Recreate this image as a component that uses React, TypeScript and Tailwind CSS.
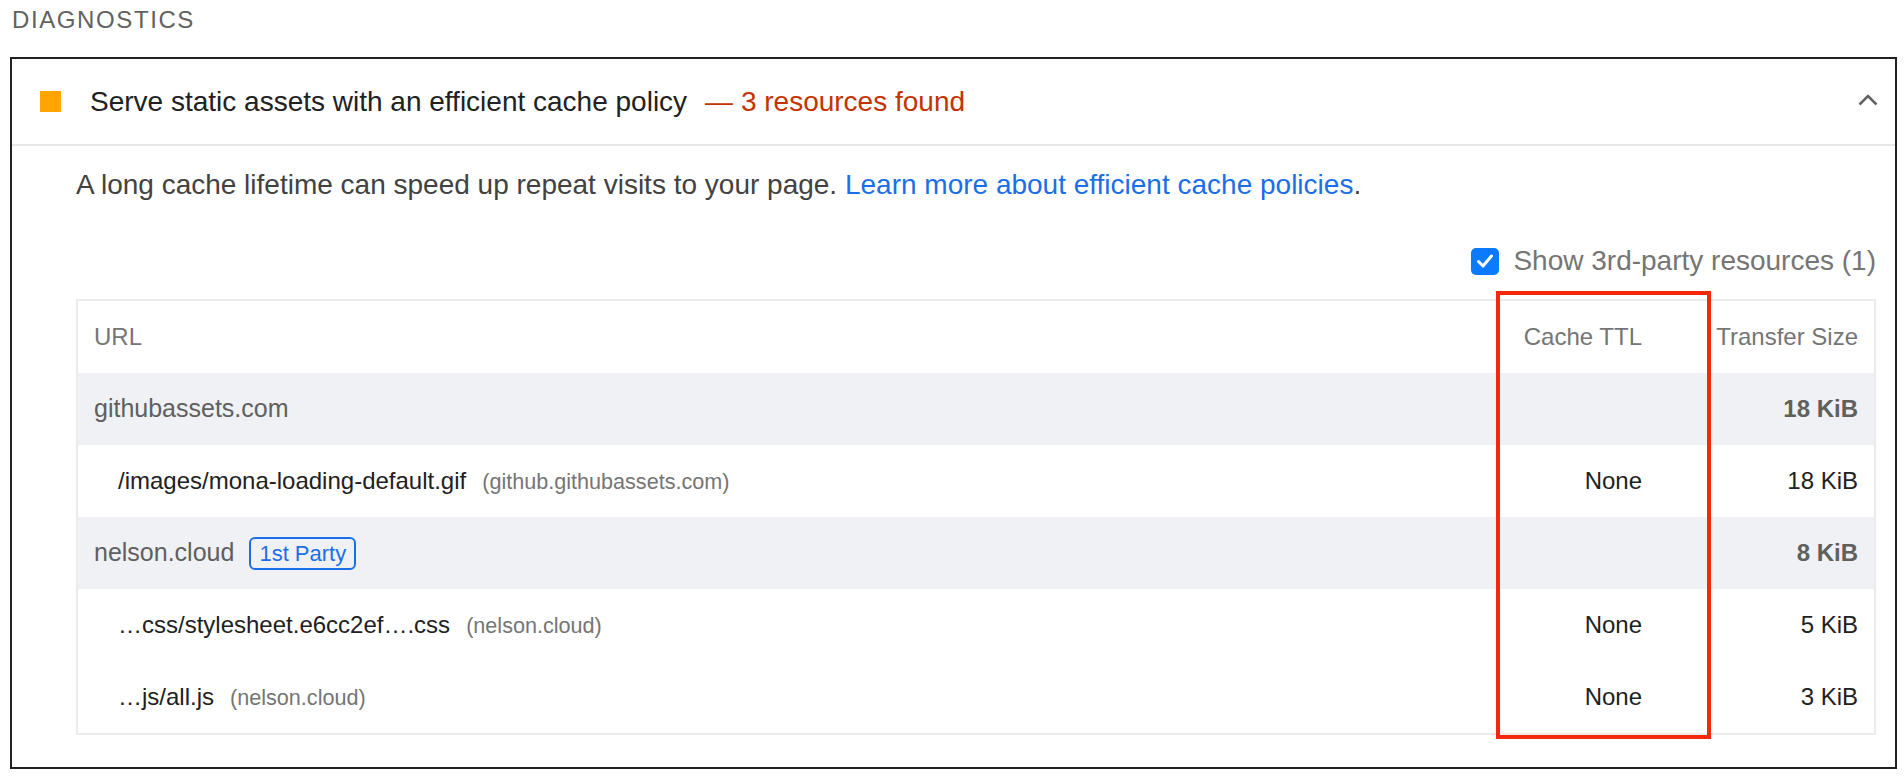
import React from "react";

type Row =
  | { kind: "group"; host: string; badge?: string; size: string }
  | { kind: "item"; url: string; host: string; ttl: string; size: string };

const rows: Row[] = [
  { kind: "group", host: "githubassets.com", size: "18 KiB" },
  {
    kind: "item",
    url: "/images/mona-loading-default.gif",
    host: "(github.githubassets.com)",
    ttl: "None",
    size: "18 KiB",
  },
  { kind: "group", host: "nelson.cloud", badge: "1st Party", size: "8 KiB" },
  {
    kind: "item",
    url: "…css/stylesheet.e6cc2ef….css",
    host: "(nelson.cloud)",
    ttl: "None",
    size: "5 KiB",
  },
  { kind: "item", url: "…js/all.js", host: "(nelson.cloud)", ttl: "None", size: "3 KiB" },
];

function Chevron() {
  return (
    <svg width="20" height="12" viewBox="0 0 20 12" fill="none">
      <polyline points="1.5,10.5 10,2 18.5,10.5" stroke="#616161" strokeWidth="2.5" />
    </svg>
  );
}

function Checkbox() {
  return (
    <div className="grid h-[27px] w-[28px] place-items-center rounded-[5px] bg-[#0a7aff]">
      <svg width="18" height="16" viewBox="0 0 18 16" fill="none">
        <polyline
          points="2.5,8.5 7,13 15.5,3"
          stroke="white"
          strokeWidth="3"
          strokeLinecap="round"
          strokeLinejoin="round"
        />
      </svg>
    </div>
  );
}

export default function App() {
  return (
    <div className="relative h-[782px] w-[1904px] overflow-hidden bg-white font-['Liberation_Sans',Arial,sans-serif]">
      <div className="pl-[12px] pt-[8px] text-[24px] leading-[24px] tracking-[1.6px] text-[#616161]">
        DIAGNOSTICS
      </div>

      <div className="ml-[10px] mt-[25px] h-[712px] w-[1887px] border-2 border-[#202124]">
        {/* audit header */}
        <div className="flex h-[87px] items-center border-b-2 border-[#e8e8e8] pl-[28px] pr-[17px]">
          <div className="h-[21px] w-[21px] bg-[#ffa400]" />
          <span className="ml-[29px] text-[28px] text-[#212121]">
            Serve static assets with an efficient cache policy
          </span>
          <span className="ml-[18px] text-[28px] text-[#c33300]">— 3 resources found</span>
          <div className="ml-auto -mt-[4px]">
            <Chevron />
          </div>
        </div>

        {/* audit body */}
        <div className="pl-[64px] pr-[19px] pt-[19px]">
          <p className="text-[28px] leading-[40px] text-[#424242]">
            A long cache lifetime can speed up repeat visits to your page.{" "}
            <span className="text-[#1a6fe8]">Learn more about efficient cache policies</span>.
          </p>

          <div className="mt-[40px] flex h-[32px] items-center justify-end gap-[14px]">
            <Checkbox />
            <span className="text-[28px] text-[#757575]">Show 3rd-party resources (1)</span>
          </div>

          <div className="mt-[22px] border-2 border-[#ececec] text-[24px]">
            <div className="flex h-[72px] items-center text-[#757575]">
              <div className="flex-1 pl-[16px]">URL</div>
              <div className="w-[200px] pr-[18px] text-right">Cache TTL</div>
              <div className="w-[214px] pr-[16px] text-right">Transfer Size</div>
            </div>
            {rows.map((r, i) =>
              r.kind === "group" ? (
                <div key={i} className="flex h-[72px] items-center bg-[#eff1f4] text-[#5f5f5f]">
                  <div className="flex flex-1 items-center pl-[16px]">
                    <span className="text-[25px]">{r.host}</span>
                    {r.badge && (
                      <span className="ml-[15px] flex h-[33px] items-center rounded-[6px] border-2 border-[#1a6fe8] px-[8px] text-[22px] text-[#1a6fe8]">
                        {r.badge}
                      </span>
                    )}
                  </div>
                  <div className="w-[200px]" />
                  <div className="w-[214px] pr-[16px] text-right font-bold">{r.size}</div>
                </div>
              ) : (
                <div key={i} className="flex h-[72px] items-center bg-white text-[#212121]">
                  <div className="flex flex-1 items-baseline pl-[40px]">
                    <span>{r.url}</span>
                    <span className="ml-[16px] text-[21.6px] text-[#757575]">{r.host}</span>
                  </div>
                  <div className="w-[200px] pr-[18px] text-right">{r.ttl}</div>
                  <div className="w-[214px] pr-[16px] text-right">{r.size}</div>
                </div>
              )
            )}
          </div>
        </div>
      </div>

      {/* annotation box */}
      <div className="absolute left-[1496px] top-[291px] h-[448px] w-[215px] border-4 border-[#f4290c]" />
    </div>
  );
}
